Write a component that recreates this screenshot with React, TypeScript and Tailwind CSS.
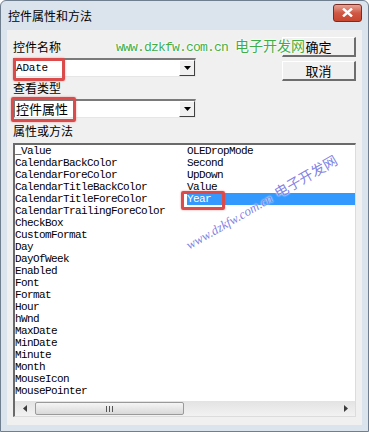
import React from 'react'

const leftItems = [
  '_Value',
  'CalendarBackColor',
  'CalendarForeColor',
  'CalendarTitleBackColor',
  'CalendarTitleForeColor',
  'CalendarTrailingForeColor',
  'CheckBox',
  'CustomFormat',
  'Day',
  'DayOfWeek',
  'Enabled',
  'Font',
  'Format',
  'Hour',
  'hWnd',
  'MaxDate',
  'MinDate',
  'Minute',
  'Month',
  'MouseIcon',
  'MousePointer',
]

const rightItems = ['OLEDropMode', 'Second', 'UpDown', 'Value', 'Year']

const cjk = "font-['Noto_Sans_CJK_SC','Liberation_Sans',sans-serif]"
const mono = "font-['Liberation_Mono','Noto_Sans_CJK_SC',monospace]"

function Combo({ value, mono: isMono }: { value: string; mono?: boolean }) {
  return (
    <div className="flex h-[19px] w-[183px] border-t-2 border-l-2 border-t-[#7a7a7a] border-l-[#7a7a7a] border-r border-b border-r-[#e6e6e6] border-b-[#e6e6e6] bg-white">
      <div
        className={`flex-1 flex items-center pl-[1px] text-black ${
          isMono ? `${mono} text-[11px] tracking-[-0.2px]` : `${cjk} text-[13px]`
        }`}
      >
        {value}
      </div>
      <div className="w-[16px] flex items-center justify-center bg-[#f0f0f0] border-t border-l border-t-white border-l-white border-r border-b border-r-[#404040] border-b-[#404040]">
        <svg width="7" height="4" viewBox="0 0 7 4">
          <path d="M0 0h7L3.5 4z" fill="#000" />
        </svg>
      </div>
    </div>
  )
}

function Btn({ label }: { label: string }) {
  return (
    <div
      className={`h-[20px] w-[74px] flex items-center justify-center bg-[#f0f0f0] border-t border-l border-t-white border-l-white border-r-2 border-b-2 border-r-[#6d6d6d] border-b-[#6d6d6d] text-[13px] text-black ${cjk}`}
    >
      {label}
    </div>
  )
}

function Mark({ className }: { className: string }) {
  return (
    <div
      className={`absolute border-[3px] border-[#dc4b4b] rounded-[2px] shadow-[0_0_2px_rgba(220,75,75,0.6)] ${className}`}
    />
  )
}

export default function App() {
  return (
    <div className="relative w-[369px] h-[432px] overflow-hidden bg-[#dbe3ec] border border-[#6f7f90] rounded-t-[6px] flex flex-col">
      {/* title bar */}
      <div className="h-[29px] flex items-center pl-[7px] pr-[6px] shrink-0">
        <span className={`text-[12px] text-black ${cjk}`}>控件属性和方法</span>
        <div className="ml-auto mt-[-6px] w-[29px] h-[18px] rounded-[3px] border border-[#7a2b22] bg-gradient-to-b from-[#e5a397] via-[#cf5844] to-[#c8462f] flex items-center justify-center">
          <svg width="11" height="9" viewBox="0 0 11 9">
            <path d="M1 0.5L10 8.5M10 0.5L1 8.5" stroke="#fff" strokeWidth="2.4" />
          </svg>
        </div>
      </div>

      {/* client area */}
      <div className="flex-1 mx-[6px] mb-[6px] bg-[#f0f0f0] pl-[6px] pr-[6px] pt-[7px] flex flex-col">
        <div className="flex">
          <div className="flex flex-col w-[184px]">
            <div className={`h-[20px] flex items-center text-[12px] text-black ${cjk}`}>控件名称</div>
            <div className="mt-[1px]">
              <Combo value="ADate" mono />
            </div>
            <div className={`h-[21px] flex items-center text-[12px] text-black ${cjk}`}>查看类型</div>
            <div className="mt-[1px]">
              <Combo value="控件属性" />
            </div>
            <div className={`h-[25px] flex items-center text-[12px] text-black ${cjk}`}>属性或方法</div>
          </div>
          <div className="ml-auto flex flex-col gap-[4px]">
            <Btn label="确定" />
            <Btn label="取消" />
          </div>
        </div>

        {/* list box */}
        <div className="h-[274px] flex flex-col border-t-2 border-l-2 border-t-[#6a6a6a] border-l-[#6a6a6a] border-r border-b border-r-[#dcdcdc] border-b-[#dcdcdc] bg-white">
          <div className={`h-[256px] flex text-[11px] leading-[12px] tracking-[-0.6px] text-black ${mono}`}>
            <div className="w-[172px] flex flex-col">
              {leftItems.map((t) => (
                <div key={t} className="h-[12px] whitespace-nowrap">
                  {t}
                </div>
              ))}
            </div>
            <div className="flex-1 flex flex-col">
              {rightItems.map((t) => (
                <div
                  key={t}
                  className={`h-[12px] whitespace-nowrap ${t === 'Year' ? 'bg-[#3399ff] text-white' : ''}`}
                >
                  {t}
                </div>
              ))}
            </div>
          </div>
          {/* horizontal scrollbar */}
          <div className="h-[15px] flex items-center bg-gradient-to-b from-[#e3e3e3] to-[#f2f2f2]">
            <div className="w-[20px] flex justify-center">
              <svg width="4" height="7" viewBox="0 0 4 7">
                <path d="M4 0v7L0 3.5z" fill="#3c3c3c" />
              </svg>
            </div>
            <div className="w-[149px] h-[13px] rounded-[2px] border border-[#9a9a9a] bg-gradient-to-b from-[#f5f5f5] to-[#d9d9d9] flex items-center justify-center">
              <svg width="7" height="6" viewBox="0 0 7 6">
                <path d="M0.5 0v6M3.5 0v6M6.5 0v6" stroke="#555" strokeWidth="1" />
              </svg>
            </div>
            <div className="ml-auto w-[18px] flex justify-center">
              <svg width="4" height="7" viewBox="0 0 4 7">
                <path d="M0 0v7L4 3.5z" fill="#3c3c3c" />
              </svg>
            </div>
          </div>
        </div>
      </div>

      {/* annotations */}
      <Mark className="left-[12px] top-[57px] w-[52px] h-[23px]" />
      <Mark className="left-[10px] top-[96px] w-[65px] h-[25px]" />
      <Mark className="left-[180px] top-[190px] w-[44px] h-[19px]" />

      {/* watermarks */}
      <div
        className={`absolute left-[115px] top-[34px] flex items-baseline gap-[7px] text-[#3fae47] [text-shadow:0_0_2px_#fff,0_0_2px_#fff,0_0_3px_#fff]`}
      >
        <span className={`text-[13px] font-['Liberation_Mono',monospace] tracking-[-0.8px]`}>www.dzkfw.com.cn</span>
        <span className={`text-[14px] ${cjk}`}>电子开发网</span>
      </div>
      <div
        className="absolute left-[173px] top-[186px] w-[190px] rotate-[-30deg] flex items-baseline gap-[5px] text-[#6262dc]/80 [text-shadow:0_0_2px_#fff,0_0_2px_#fff]"
      >
        <span className="text-[13px] font-['Liberation_Serif',serif] italic">www.dzkfw.com.cn</span>
        <span className={`text-[14px] ${cjk}`}>电子开发网</span>
      </div>
    </div>
  )
}
